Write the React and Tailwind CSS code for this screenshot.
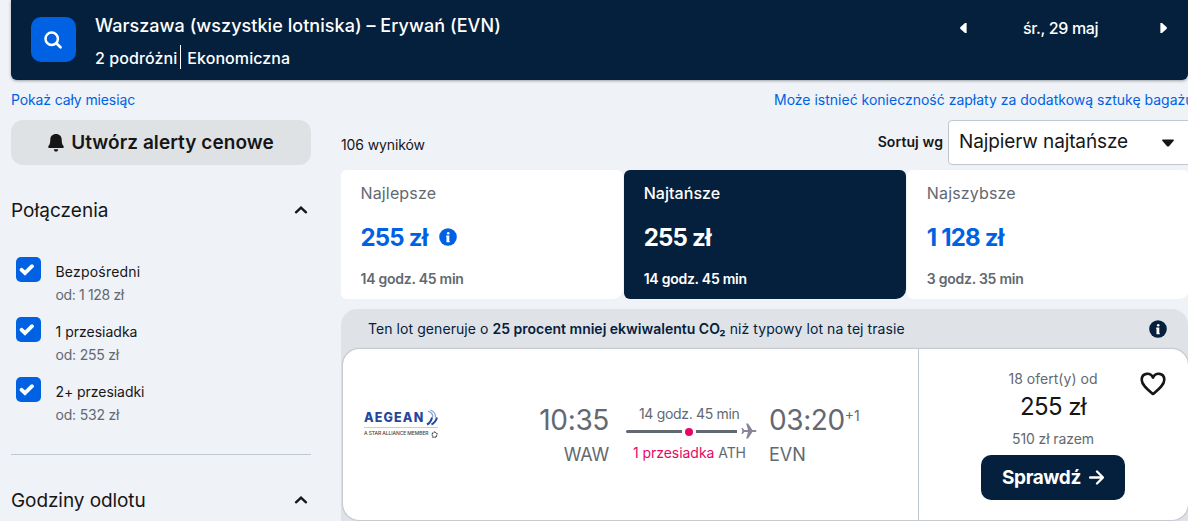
import React from "react";

const filters = [
  { label: "Bezpośredni", price: "od: 1 128 zł", labelClass: "tracking-[0.2px]", priceClass: "tracking-[-0.35px]" },
  { label: "1 przesiadka", price: "od: 255 zł", labelClass: "tracking-[0px]", priceClass: "tracking-[-0.2px]" },
  { label: "2+ przesiadki", price: "od: 532 zł", labelClass: "tracking-[-0.05px]", priceClass: "tracking-[-0.2px]" },
];

const tabs = [
  { title: "Najlepsze", price: "255 zł", time: "14 godz. 45 min", info: true },
  { title: "Najtańsze", price: "255 zł", time: "14 godz. 45 min", active: true },
  { title: "Najszybsze", price: "1 128 zł", time: "3 godz. 35 min" },
];

const InfoIcon = ({ className }) => (
  <svg viewBox="0 0 18 18" className={className}>
    <circle cx="9" cy="9" r="8.8" fill="currentColor" />
    <circle cx="9.2" cy="5.2" r="1.3" fill="white" />
    <path d="M7.4 7.600h2.900v5.700h.5v.9H7.500v-5.500h-.6z" fill="white" />
  </svg>
);

const Chevron = () => (
  <svg viewBox="0 0 14 10" className="w-[14px] h-[10px] text-[#161616]">
    <path d="M2 7.300 7 2.600l5 4.700" fill="none" stroke="currentColor" strokeWidth="2.400" strokeLinecap="round" />
  </svg>
);

const Header = () => (
  <header className="h-20 bg-[#05203c] rounded-b-md shadow-[0_1px_3px_rgba(0,0,0,0.35)] flex items-start text-white">
    <button className="mt-[17px] ml-5 w-[45px] h-[45px] rounded-[10px] bg-[#0062e3] flex items-center justify-center">
      <svg viewBox="0 0 20 20" className="w-5 h-5 mr-0.5">
        <circle cx="8.7" cy="8.700" r="6.200" fill="none" stroke="white" strokeWidth="2.500" />
        <path d="m13.300 13.300 4.200 4" stroke="white" strokeWidth="2.700" strokeLinecap="round" />
      </svg>
    </button>
    <div className="ml-[19px] pt-[14px] whitespace-nowrap">
      <p className="text-[18px] leading-6 font-medium tracking-[0.050px]">Warszawa (wszystkie lotniska) – Erywań (EVN)</p>
      <div className="mt-2 flex items-center text-[16px] leading-6 font-medium">
        <span className="tracking-[0.080px]">2 podróżni</span>
        <span className="ml-[3px] w-px h-6 -translate-y-px bg-white" />
        <span className="ml-1.5 tracking-[0.080px]">Ekonomiczna</span>
      </div>
    </div>
    <div className="ml-auto mr-5 mt-4 w-[208px] h-6 flex items-center">
      <svg viewBox="0 0 7 10" className="w-[7px] h-[10px]"><path d="M6.600 0v10H5L.5 6Q-.3 5 .5 4L5 0z" fill="white" /></svg>
      <span className="ml-14 text-[16px] font-medium tracking-[-0.350px]">śr., 29 maj</span>
      <svg viewBox="0 0 7 10" className="ml-auto mr-px w-[7px] h-[10px]"><path d="M.4 0v10H2l4.500-4q.8-1 0-2L2 0z" fill="white" /></svg>
    </div>
  </header>
);

const Sidebar = () => (
  <aside className="w-[300px] shrink-0">
    <button className="w-full h-[45px] rounded-xl bg-[#dfe2e5] flex items-center justify-center gap-[7px] text-[#161616]">
      <svg viewBox="0 0 16 18" className="w-4 h-[18px]">
        <path d="M8 0C4.600 0 2.400 2.300 2.300 5.500 2.200 9.500 1.600 10.600.4 12.200c-.6.9-.2 1.700.8 1.700h13.600c1 0 1.400-.8.8-1.700-1.200-1.600-1.800-2.700-1.900-6.700C13.600 2.300 11.400 0 8 0zM5.800 15.300h4.400A2.200 2.400 0 0 1 5.800 15.300z" fill="currentColor" />
      </svg>
      <span className="pt-0.5 text-[19px] font-semibold tracking-[0.050px] whitespace-nowrap">Utwórz alerty cenowe</span>
    </button>
    <div className="mt-[33px] h-6 flex items-center justify-between pr-[3px]">
      <h2 className="pt-0.5 text-[19px] leading-6 tracking-[0.050px]">Połączenia</h2>
      <Chevron />
    </div>
    <div className="mt-[35px] flex flex-col gap-[15px]">
      {filters.map((f) => (
        <label key={f.label} className="flex h-[45px] pl-[5px] text-[14px] leading-[23px]">
          <span className="w-[25px] h-[25px] rounded-[5px] bg-[#0062e3] text-white flex items-center justify-center pr-[3px]">
            <svg viewBox="0 0 16 13" className="w-4 h-[13px]">
              <path d="M2.600 6.800 6 10l7-6.800" fill="none" stroke="currentColor" strokeWidth="3.800" strokeLinecap="round" />
            </svg>
          </span>
          <span className="ml-[14.500px] pt-[3px] whitespace-nowrap">
            <span className={`block ${f.labelClass}`}>{f.label}</span>
            <span className={`block text-[#626971] ${f.priceClass}`}>{f.price}</span>
          </span>
        </label>
      ))}
    </div>
    <div className="mt-[32px] h-px bg-[#c1c7cf]" />
    <div className="mt-[33px] h-6 flex items-center justify-between pr-[3px]">
      <h2 className="pt-0.5 text-[19px] leading-6 tracking-[-0.080px]">Godziny odlotu</h2>
      <Chevron />
    </div>
  </aside>
);

const SortTabs = () => (
  <div className="grid grid-cols-3 gap-[1.5px] w-[848px] h-[129px]">
    {tabs.map((t) => (
      <div key={t.title} className={`rounded-md rounded-br-[10px] pl-[19.500px] pt-[11px] whitespace-nowrap ${t.active ? "bg-[#05203c] text-white" : "bg-white text-[#626971]"}`}>
        <p className={`text-[16px] leading-6 ${t.active ? "font-medium tracking-[0.050px]" : "tracking-[0.150px]"}`}>{t.title}</p>
        <div className={`mt-[17px] flex items-center gap-[12px] text-[24px] leading-8 font-bold tracking-[-0.800px] ${t.active ? "" : "text-[#0062e3]"}`}>
          {t.price}
          {t.info && <InfoIcon className="w-[18px] h-[18px] -translate-y-px" />}
        </div>
        <p className="mt-[15px] text-[14px] leading-5 font-semibold tracking-[-0.250px]">{t.time}</p>
      </div>
    ))}
  </div>
);

const AegeanLogo = () => (
  <div className="w-[74px] leading-none">
    <div className="flex items-center h-[17px] text-[#24479a]">
      <span className="w-[62px] pt-0.5 text-[12.500px] font-extrabold tracking-[1.150px]">AEGEAN</span>
      <svg viewBox="0 0 12 17" className="w-3 h-[17px]">
        <path d="M2 2.200q5.500 2 4.500 6.300M4.500 1q5.500 2.500 5 7.500" fill="none" stroke="#8aa3cf" strokeWidth="1.300" />
        <path d="M1 15.500Q5 13.500 6 8.500M5.500 15.500q4-2 5.500-7" fill="none" stroke="currentColor" strokeWidth="2" />
      </svg>
    </div>
    <div className="mt-px h-px bg-[#ccc]" />
    <div className="mt-[2px] flex items-center h-2 text-[#444]">
      <span className="-mt-px text-[5px] font-medium tracking-[-0.100px] whitespace-nowrap">A STAR ALLIANCE MEMBER</span>
      <svg viewBox="0 0 8 8" className="ml-auto w-[7px] h-[7px]">
        <path d="m4 1 3 2.200L6 7H2L1 3.200z" fill="none" stroke="currentColor" strokeWidth="1.200" strokeDasharray="2 .6" />
      </svg>
    </div>
  </div>
);

const Flight = () => (
  <div className="w-[575px] flex text-[#626971] whitespace-nowrap">
    <div className="ml-[21px] mt-[60px]">
      <AegeanLogo />
    </div>
    <div className="ml-auto mt-[55px] text-right">
      <p className="text-[28px] leading-8 tracking-[-0.350px]">10:35</p>
      <p className="mt-[7px] text-[18px] leading-6 tracking-[-0.200px]">WAW</p>
    </div>
    <div className="ml-[17px] mt-[55px] w-[131px]">
      <p className="pl-[13px] text-[14px] leading-5 tracking-[-0.330px]">14 godz. 45 min</p>
      <div className="h-[15px] flex items-center">
        <span className="w-[56px] h-[3px] rounded-l-full bg-[#626971]" />
        <span className="mx-[3px] w-2 h-2 rounded-full bg-[#e70866]" />
        <span className="w-[41px] h-[3px] bg-[#626971]" />
        <svg viewBox="0 0 16 16" className="ml-1 -mt-px w-4 h-4 text-[#8a849b]">
          <path d="M5.200.5h1.900l4.300 6.500h3.100c1.400.3 1.400 1.700 0 2h-3.100l-4.300 6.500H5.200L7 9H3.300l-1.700 2H.4L1.400 8 .4 5h1.200l1.700 2H7z" fill="currentColor" />
        </svg>
      </div>
      <p className="mt-1 pl-[7px] text-[14px] leading-5 tracking-[-0.050px]"><span className="text-[#e70866]">1 przesiadka</span> ATH</p>
    </div>
    <div className="ml-3 mt-[55px] w-[149px]">
      <div className="flex items-start">
        <span className="text-[28px] leading-8 tracking-[-0.400px]">03:20</span>
        <span className="mt-0.5 text-[14px] leading-5">+1</span>
      </div>
      <p className="mt-[7px] text-[18px] leading-6">EVN</p>
    </div>
  </div>
);

const Offer = () => (
  <div className="relative flex-1 border-l border-[#c1c7cf] pt-5 pr-px flex flex-col items-center text-[#626971] whitespace-nowrap">
    <p className="text-[14px] leading-5 tracking-[0.030px]">18 ofert(y) od</p>
    <p className="mt-0.5 text-[24px] leading-8 tracking-[-0.600px] text-[#161616]">255 zł</p>
    <p className="mt-1.5 text-[14px] leading-5 tracking-[-0.100px]">510 zł razem</p>
    <button className="mt-[6px] w-[144px] h-[45px] rounded-[10px] bg-[#05203c] text-white flex items-center justify-center gap-2">
      <span className="pt-0.5 text-[19px] font-bold tracking-[-0.400px]">Sprawdź</span>
      <svg viewBox="0 0 15 15" className="w-[15px] h-[15px]">
        <path d="M1 7.500h12.500M8 1.500l6 6-6 6" fill="none" stroke="white" strokeWidth="2.300" strokeLinecap="round" strokeLinejoin="round" />
      </svg>
    </button>
    <svg viewBox="0 0 26 24" className="absolute right-[22px] top-[23px] w-[26px] h-6 text-[#161616]">
      <path d="M13 5.600C10.500 0 2 .6 1.700 7.600 1.600 13 8 17.800 13 22c5-4.200 11.400-9 11.300-14.400C24 .6 15.500 0 13 5.600z" fill="none" stroke="currentColor" strokeWidth="2.600" strokeLinejoin="round" />
    </svg>
  </div>
);

const App = () => {
  return (
    <div className="w-[1188px] h-[521px] overflow-hidden pl-[11px] bg-[#eff2f7] text-[#161616] font-['Inter',sans-serif] font-[380]">
      <Header />
      <div className="h-10 pb-0.5 flex items-center justify-between text-[14px] text-[#0062e3] whitespace-nowrap">
        <a className="tracking-[-0.120px]">Pokaż cały miesiąc</a>
        <a className="w-[414px]">Może istnieć konieczność zapłaty za dodatkową sztukę bagażu</a>
      </div>
      <div className="flex gap-[30px]">
        <Sidebar />
        <main className="w-[847px]">
          <div className="h-[50px] flex items-start whitespace-nowrap">
            <span className="mt-[15px] text-[14px] leading-5 tracking-[-0.120px]">106 wyników</span>
            <span className="ml-auto mt-3 text-[14px] leading-5 font-semibold tracking-[0.100px]">Sortuj wg</span>
            <div className="ml-[5px] -mr-1 w-[244px] h-[45px] rounded border border-[#c1c7cf] bg-white flex items-center justify-between pl-2.5 pr-[17px]">
              <span className="text-[19px] tracking-[-0.120px]">Najpierw najtańsze</span>
              <svg viewBox="0 0 12 8" className="w-3 h-2"><path d="M.5.500h11q.8.800 0 1.600L7 7.200q-1 .8-2 0L.5 2.100Q-.3 1.300.5.500z" fill="currentColor" /></svg>
            </div>
          </div>
          <SortTabs />
          <section className="mt-2.5 h-[212px] rounded-t-2xl bg-[#dfe3e8] pl-[2px]">
            <div className="h-10 flex items-center justify-between pl-[25px] pr-[21px] text-[14px] text-[#05203c] whitespace-nowrap">
              <p className="-mt-0.5 tracking-[0.070px]">
                Ten lot generuje o <b className="font-semibold tracking-normal">25 procent mniej ekwiwalentu CO₂</b> niż typowy lot na tej trasie
              </p>
              <InfoIcon className="w-[18px] h-[18px]" />
            </div>
            <div className="h-[171px] rounded-2xl bg-white shadow-[0_0_2px_rgba(0,0,0,0.4)] flex overflow-hidden">
              <Flight />
              <Offer />
            </div>
          </section>
        </main>
      </div>
    </div>
  );
};

export default App;
